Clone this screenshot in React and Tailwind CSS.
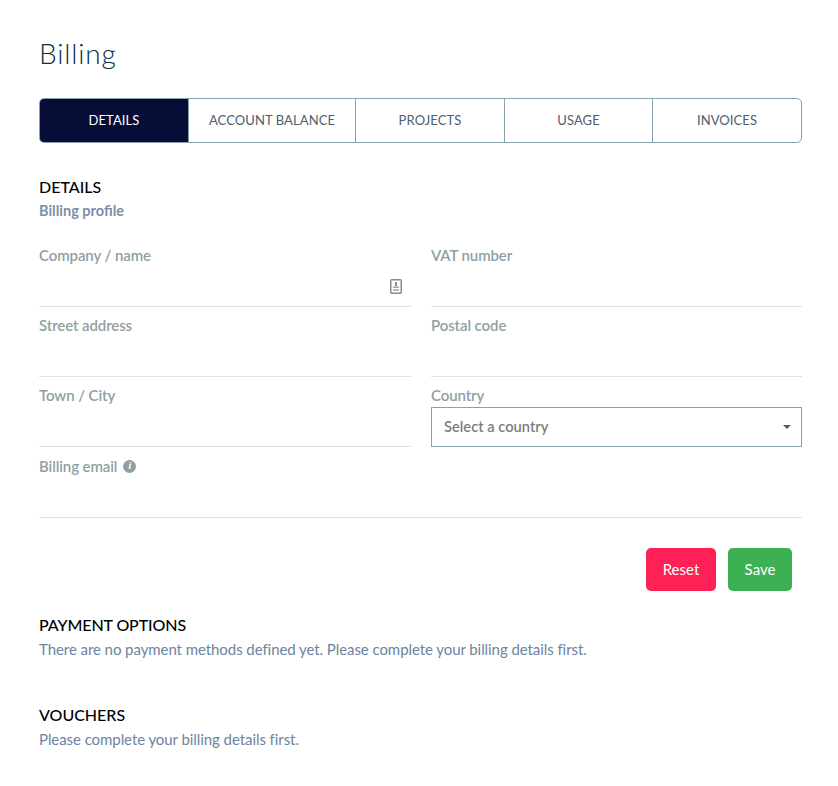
const font = "font-['Lato','Noto_Sans',sans-serif]"

function Field({ label, children, info, last }) {
  return (
    <div className={`${last ? 'h-[71px] pt-[9px]' : 'h-[70px] pt-[8px]'} border-b border-[#dfe2e3] relative`}>
      <div className="flex items-center gap-[6px] text-[15px] leading-[20px] font-semibold tracking-[-0.1px] text-[#8f9fa3]">
        {label}
        {info && (
          <span className="w-[13px] h-[13px] rounded-full bg-[#8f9fa3] text-white flex items-center justify-center text-[10px] font-bold italic leading-none font-['Liberation_Serif',serif]">i</span>
        )}
      </div>
      {children}
    </div>
  )
}

export default function App() {
  const tabs = ['DETAILS', 'ACCOUNT BALANCE', 'PROJECTS', 'USAGE', 'INVOICES']

  return (
    <div className={`${font} bg-white min-h-[786px] w-[838px] px-[39px] pt-[33px] box-border`}>
      <h1 className="text-[28px] leading-[40px] font-light text-[#0f2f40] tracking-[0.8px]">Billing</h1>

      <div className="mt-[25px] w-[763px] h-[45px] grid grid-cols-[148px_167px_149px_148px_1fr] border border-[#8ba0ad] rounded-[5px] overflow-hidden">
        {tabs.map((t, i) => (
          <div
            key={t}
            className={`flex items-center justify-center text-[13px] tracking-[0.1px] ${i > 0 ? 'border-l border-[#8ba0ad]' : ''} ${i === 0 ? 'bg-[#060d36] text-white' : 'text-[#4a6070]'}`}
          >
            {t}
          </div>
        ))}
      </div>

      <h2 className="mt-[34px] text-[16px] leading-[20px] font-medium text-black">DETAILS</h2>
      <p className="mt-[5px] text-[14.5px] leading-[18px] font-bold text-[#7b8fa8]">Billing profile</p>

      <div className="mt-[17px] grid grid-cols-[372px_371px] gap-x-[20px]">
        <Field label="Company / name">
          <svg className="absolute right-[9px] top-[42px]" width="12" height="15" viewBox="0 0 12 15" fill="none">
            <rect x="0.75" y="0.75" width="10.5" height="13.5" rx="1" stroke="#8a8a8a" strokeWidth="1.5" />
            <rect x="5" y="3" width="2" height="4" fill="#8a8a8a" />
            <rect x="3" y="7.5" width="6" height="1.5" fill="#a8a8a8" />
            <rect x="3" y="10" width="6" height="2" fill="#b8b8b8" />
          </svg>
        </Field>
        <Field label="VAT number" />
        <Field label="Street address" />
        <Field label="Postal code" />
        <Field label="Town / City" />
        <div className="h-[70px] pt-[8px]">
          <div className="text-[15px] leading-[20px] font-semibold tracking-[-0.1px] text-[#8f9fa3]">Country</div>
          <div className="h-[40px] mt-[2px] pb-[2px] border border-[#8ba0ad] flex items-center justify-between pl-[12px] pr-[10px] text-[14.7px] font-semibold text-[#7d7d7d]">
            Select a country
            <span className="w-0 h-0 mt-[2px] border-x-[4px] border-x-transparent border-t-[4px] border-t-[#4a6070]" />
          </div>
        </div>
        <div className="col-span-2">
          <Field label="Billing email" info last />
        </div>
      </div>

      <div className="mt-[30px] flex justify-end gap-[12px] pr-[10px] w-[763px]">
        <button className="w-[70px] h-[43px] rounded-[5px] bg-[#ff2155] text-white text-[15px]">Reset</button>
        <button className="w-[64px] h-[43px] rounded-[5px] bg-[#3eb054] text-white text-[15px]">Save</button>
      </div>

      <h2 className="mt-[24px] text-[16px] leading-[20px] font-medium text-black tracking-[-0.1px]">PAYMENT OPTIONS</h2>
      <p className="mt-[4px] text-[15px] leading-[20px] text-[#6d84a0] tracking-[-0.07px]">There are no payment methods defined yet. Please complete your billing details first.</p>

      <h2 className="mt-[46px] text-[16px] leading-[20px] font-medium text-black">VOUCHERS</h2>
      <p className="mt-[4px] text-[15px] leading-[20px] text-[#6d84a0] tracking-[-0.07px]">Please complete your billing details first.</p>
    </div>
  )
}
